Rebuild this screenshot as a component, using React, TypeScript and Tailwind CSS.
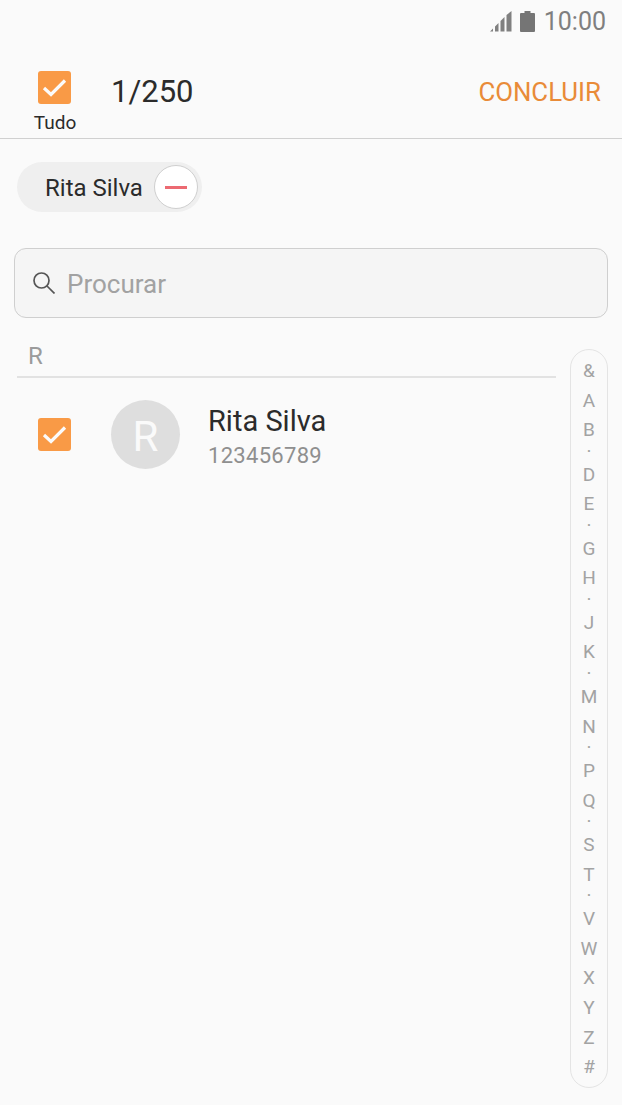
const indexItems = ["&", "A", "B", "·", "D", "E", "·", "G", "H", "·", "J", "K", "·", "M", "N", "·", "P", "Q", "·", "S", "T", "·", "V", "W", "X", "Y", "Z", "#"];

function CheckBox() {
  return (
    <div className="w-[33px] h-[33px] rounded-[3px] bg-[#f99a46] flex items-center justify-center">
      <svg width="33" height="33" viewBox="0 0 33 33" fill="none">
        <path d="M6 17 L13 23.500 L27 9.500" stroke="#fbfbfb" strokeWidth="3.200" />
      </svg>
    </div>
  );
}

export default function App() {
  return (
    <div className="relative w-[622px] h-[1105px] bg-[#fafafa] overflow-hidden font-['Roboto',sans-serif]">

      {/* Status bar */}
      <div className="h-[44px] flex items-center justify-end pr-[16px] pb-[2px] text-[#7f7f7f]">
        <svg width="22" height="21" viewBox="0 0 22 21" className="mr-[8px]">
          <path d="M0 20.500 L3 17.500 V20.500z M5 20.500 V15.500 L8.500 12 V20.500z M10.500 20.500 V10 L14.500 6 V20.500z M16.500 20.500 V4 L21.500 0 V20.500z" fill="#808080" />
        </svg>
        <svg width="15" height="21" viewBox="0 0 15 21" className="mr-[9px]">
          <path d="M4.500 0h6v2h3.500a1 1 0 0 1 1 1v17a1 1 0 0 1-1 1H1a1 1 0 0 1-1-1V3a1 1 0 0 1 1-1h3.500z" fill="#757575" />
        </svg>
        <span className="text-[25px] leading-none">10:00</span>
      </div>

      {/* Header */}
      <div className="h-[95px] border-b border-[#d0d0d0] flex items-start pl-[21px] pr-[21px]">
        <div className="w-[67px] flex flex-col items-center pt-[27px]">
          <CheckBox />
          <span className="mt-[7px] ml-[1px] text-[19px] leading-[24px] text-[#2b2b2b]">Tudo</span>
        </div>
        <span className="ml-[23px] mt-[29px] text-[31px] leading-[38px] text-[#2b2b2b]">1/250</span>
        <span className="ml-auto mt-[32px] text-[25.800px] leading-[32px] text-[#e98b38]">CONCLUIR</span>
      </div>

      {/* Selected chip */}
      <div className="pl-[17px] pt-[23px]">
        <div className="w-[185px] h-[50px] rounded-full bg-[#efefef] flex items-center pl-[28px] pr-[4px] justify-between">
          <span className="text-[24px] leading-[32px] pt-[1px] text-[#2b2b2b]">Rita Silva</span>
          <div className="w-[44px] h-[44px] rounded-full bg-white border border-[#cfcfcf] flex items-center justify-center">
            <div className="w-[22px] h-[3px] bg-[#ec6a72]" />
          </div>
        </div>
      </div>

      {/* Search */}
      <div className="mx-[14px] mt-[36px] h-[70px] rounded-[12px] bg-[#f5f5f5] border border-[#cfcfcf] flex items-center pl-[18px]">
        <svg width="22" height="22" viewBox="0 0 22 22" fill="none" stroke="#555555" strokeWidth="1.700" className="mr-[12px]">
          <circle cx="8.500" cy="8.500" r="7.500" />
          <path d="M14 14 L21.500 21.500" />
        </svg>
        <span className="text-[26px] leading-[34px] pt-[2px] text-[#a2a2a2]">Procurar</span>
      </div>

      {/* Section */}
      <div className="ml-[17px] w-[539px] h-[60px] border-b-2 border-[#e2e2e2] flex items-end pb-[6px] pl-[11px]">
        <span className="text-[24px] leading-[27px] text-[#9b9b9b]">R</span>
      </div>

      {/* Contact row */}
      <div className="flex items-start pl-[38px] pt-[22px]">
        <div className="mt-[18px]">
          <CheckBox />
        </div>
        <div className="ml-[40px] w-[69px] h-[69px] rounded-full bg-[#dedede] flex items-center justify-center pt-[3px] text-[42px] text-[#fafafa]">
          R
        </div>
        <div className="ml-[28px] pt-[4px]">
          <div className="text-[29px] leading-[34px] text-[#2b2b2b]">Rita Silva</div>
          <div className="mt-[4px] text-[22px] leading-[28px] text-[#8f8f8f] tracking-[0.3px]">123456789</div>
        </div>
      </div>

      {/* Alphabet index */}
      <div className="absolute left-[570px] top-[349px] w-[38px] h-[739px] rounded-full border border-[#e4e4e4] flex flex-col items-center pt-[6px] text-[#a3a3a3]">
        {indexItems.map((item, i) =>
          item === "·" ? (
            <span key={i} className="h-[14.840px] leading-[14.840px] text-[19px]">·</span>
          ) : (
            <span key={i} className="h-[29.640px] leading-[29.640px] text-[19px]">{item}</span>
          )
        )}
      </div>

    </div>
  );
}
